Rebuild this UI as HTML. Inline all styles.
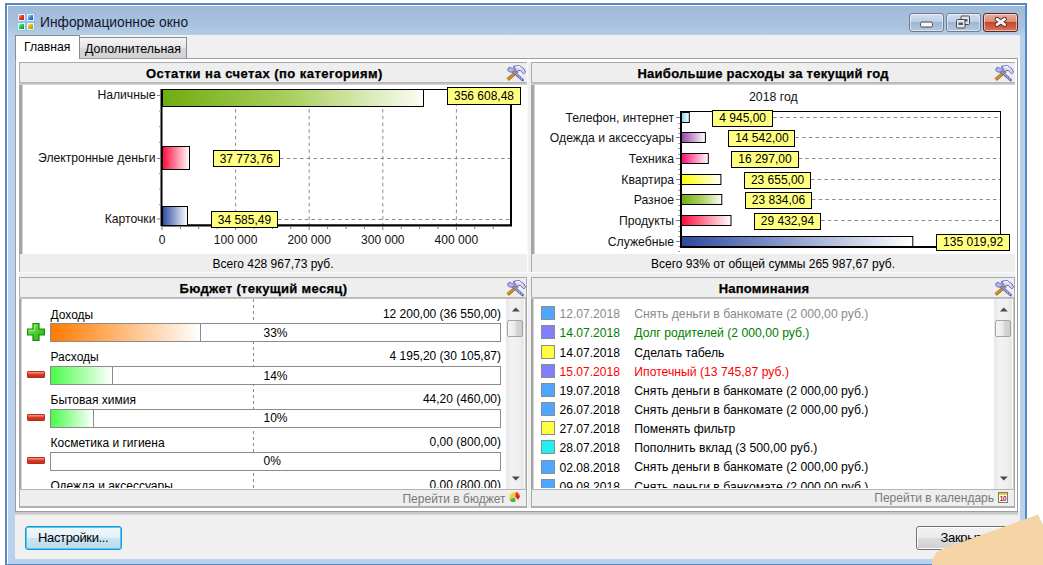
<!DOCTYPE html><html><head><meta charset="utf-8"><style>
*{margin:0;padding:0;box-sizing:border-box}
html,body{width:1043px;height:565px;overflow:hidden;background:#fff;font-family:"Liberation Sans",sans-serif}
.t{position:absolute;white-space:nowrap;line-height:1}
div{position:absolute}
</style></head><body>
<div style="position:absolute;left:5px;top:3px;width:1022px;height:562px;background:#5689c2"></div>
<div style="position:absolute;left:7px;top:5px;width:1018px;height:559px;background:#fff"></div>
<div style="position:absolute;left:8px;top:6px;width:1017px;height:558px;background:linear-gradient(#9fbad8 0px,#a9c3df 20px,#b9d1ea 32px,#b9d1ea 100%)"></div>
<div style="position:absolute;left:15px;top:35px;width:1005px;height:524px;background:#f0f0f0"></div>
<svg style="position:absolute;left:17px;top:13px" width="18" height="18" viewBox="0 0 18 18">
<defs>
<linearGradient id="ir" x1="0" y1="0" x2="1" y2="1"><stop offset="0" stop-color="#ffb0a0"/><stop offset="0.45" stop-color="#f03a20"/><stop offset="1" stop-color="#c01808"/></linearGradient>
<linearGradient id="ib" x1="0" y1="0" x2="1" y2="1"><stop offset="0" stop-color="#c8e0fa"/><stop offset="0.45" stop-color="#5a8ad0"/><stop offset="1" stop-color="#1c4a9a"/></linearGradient>
<linearGradient id="ig" x1="0" y1="0" x2="1" y2="1"><stop offset="0" stop-color="#b0f8a8"/><stop offset="0.45" stop-color="#30c830"/><stop offset="1" stop-color="#089808"/></linearGradient>
<linearGradient id="iy" x1="0" y1="0" x2="1" y2="1"><stop offset="0" stop-color="#fff0a0"/><stop offset="0.45" stop-color="#f0b800"/><stop offset="1" stop-color="#c08000"/></linearGradient>
</defs>
<rect x="0.5" y="0.5" width="8" height="8" fill="#e4f2ff" stroke="#90c0ec"/>
<rect x="9.5" y="0.5" width="8" height="8" fill="#e4f2ff" stroke="#90c0ec"/>
<rect x="0.5" y="9.5" width="8" height="8" fill="#e4f2ff" stroke="#90c0ec"/>
<rect x="9.5" y="9.5" width="8" height="8" fill="#e4f2ff" stroke="#90c0ec"/>
<rect x="2" y="2" width="5" height="5" fill="url(#ir)"/>
<rect x="11" y="2" width="5" height="5" fill="url(#ib)"/>
<rect x="2" y="11" width="5" height="5" fill="url(#ig)"/>
<rect x="11" y="11" width="5" height="5" fill="url(#iy)"/>
</svg>
<div class="t" style="left:40px;top:15.71px;font-size:13.8px;color:#15152e;">Информационное окно</div>
<div style="position:absolute;left:909px;top:13px;width:35px;height:19px;border:1px solid #6d7d92;border-radius:3px;background:linear-gradient(#d0dff0 0%,#bccfe6 45%,#9db6d3 50%,#b4c9e2 100%);box-shadow:inset 0 0 0 1px rgba(255,255,255,.5)"></div>
<div style="position:absolute;left:946px;top:13px;width:35px;height:19px;border:1px solid #6d7d92;border-radius:3px;background:linear-gradient(#d0dff0 0%,#bccfe6 45%,#9db6d3 50%,#b4c9e2 100%);box-shadow:inset 0 0 0 1px rgba(255,255,255,.5)"></div>
<div style="position:absolute;left:983px;top:13px;width:35px;height:19px;border:1px solid #5a2626;border-radius:3px;background:linear-gradient(#eab0a2 0%,#db8a76 45%,#c3462d 50%,#d9765a 100%);box-shadow:inset 0 0 0 1px rgba(255,255,255,.5)"></div>
<svg style="position:absolute;left:905px;top:12px" width="120" height="22">
<rect x="15.5" y="10" width="12" height="5" rx="1.5" fill="#fafafa" stroke="#4a4a4a" stroke-width="1"/>
<rect x="56" y="4" width="8.5" height="8.5" rx="1" fill="#e6e6e6" stroke="#4a4a4a"/>
<rect x="58" y="7" width="4.5" height="2.5" fill="#4a5a7c"/>
<rect x="51.5" y="7.5" width="8.5" height="8.5" rx="1" fill="#e6e6e6" stroke="#4a4a4a"/>
<rect x="53.5" y="10.5" width="4.5" height="2.5" fill="#4a5a7c"/>
<path d="M92 7.2 L99.6 12.6 M99.6 7.2 L92 12.6" stroke="#5a2a2a" stroke-width="4.6" stroke-linecap="round"/>
<path d="M92 7.2 L99.6 12.6 M99.6 7.2 L92 12.6" stroke="#f4f4f4" stroke-width="2.8" stroke-linecap="round"/>
</svg>
<div style="position:absolute;left:15px;top:511px;width:1003px;height:4px;background:linear-gradient(#a0a4ac 0,#a0a4ac 1px,#c6c6c6 1px,#cacaca 3px,#e4e4e4 4px)"></div>
<div style="position:absolute;left:15px;top:58px;width:1003px;height:454px;background:#fff;border:1px solid #9a9ea6"></div>
<div style="position:absolute;left:1018px;top:58px;width:2px;height:453px;background:#fff"></div>
<div style="position:absolute;left:79px;top:37px;width:108px;height:21px;border:1px solid #898c95;border-bottom:none;background:linear-gradient(#f4f4f4,#e6e6e6 50%,#d8d8d8 51%,#d2d2d2)"></div>
<div style="position:absolute;left:15px;top:35px;width:65px;height:24px;border:1px solid #898c95;border-bottom:none;background:#fff"></div>
<div class="t" style="left:24px;top:41px;font-size:12.2px;color:#000;">Главная</div>
<div class="t" style="left:85px;top:43.2px;font-size:12.4px;color:#000;">Дополнительная</div>
<div style="position:absolute;left:527px;top:62px;width:4px;height:446px;background:#efefef;border-left:1px solid #f9f9f9"></div>
<div style="position:absolute;left:19px;top:272px;width:996px;height:5px;background:#efefef;border-top:1px solid #f9f9f9"></div>
<div style="position:absolute;left:19px;top:62px;width:508px;height:210px;background:#eeeeee;border-top:1px solid #a9a9a9;border-left:1px solid #a9a9a9;"></div>
<div style="position:absolute;left:19px;top:84px;width:508px;height:170px;background:#fff;border-left:3px solid #a4a4a4;box-shadow:inset 1px 0 0 #d4d4d4"></div>
<div style="position:absolute;left:19px;top:82px;width:508px;height:3px;background:linear-gradient(#b2b2b2,#c4c4c4 66%,#e4e4e4)"></div>
<div class="t" style="left:146px;top:67.19px;font-size:13px;color:#000;font-weight:bold;letter-spacing:0.457px;-webkit-text-stroke:0.25px #000">Остатки на счетах (по категориям)</div>
<svg style="position:absolute;left:504px;top:62px" width="24" height="24" viewBox="0 0 24 24">
<path d="M3.6 17.6 L13.4 9.2" stroke="#b07818" stroke-width="3.4" stroke-linecap="butt"/>
<path d="M3.8 17.2 L13.2 9.4" stroke="#f0b040" stroke-width="1.6" stroke-dasharray="1,1"/>
<path d="M9 9.5 L18.6 18" stroke="#6c6cb8" stroke-width="2.8" stroke-linecap="round"/>
<path d="M9.5 9.8 L18 17.4" stroke="#e8e8fa" stroke-width="1" stroke-dasharray="1.5,1"/>
<path d="M9.5 4.2 L15.2 3.6 L19.8 6.6 L21.6 10.2 L19.8 11.8 L16.2 8.4 L12.4 9.2 Z" fill="#d4d6f4" stroke="#6a6ac0" stroke-width="1"/>
<path d="M12 5 L15 4.6 L17.5 6.5" stroke="#ffffff" stroke-width="1.2" fill="none"/>
<path d="M4.2 6 L6.5 5.2 L8.2 7 L9.5 5.5 L10.6 6.6 L9.5 9.8 L6.2 10.2 L3.8 8.6 Z" fill="#b4bcea" stroke="#6a6ac0" stroke-width="1"/>
</svg>
<div style="position:absolute;left:531px;top:62px;width:484px;height:210px;background:#eeeeee;border-top:1px solid #a9a9a9;border-left:1px solid #a9a9a9;"></div>
<div style="position:absolute;left:531px;top:84px;width:484px;height:170px;background:#fff;border-left:3px solid #a4a4a4;box-shadow:inset 1px 0 0 #d4d4d4"></div>
<div style="position:absolute;left:531px;top:82px;width:484px;height:3px;background:linear-gradient(#b2b2b2,#c4c4c4 66%,#e4e4e4)"></div>
<div class="t" style="left:637.4px;top:67.19px;font-size:13px;color:#000;font-weight:bold;letter-spacing:0.274px;-webkit-text-stroke:0.25px #000">Наибольшие расходы за текущий год</div>
<svg style="position:absolute;left:992px;top:62px" width="24" height="24" viewBox="0 0 24 24">
<path d="M3.6 17.6 L13.4 9.2" stroke="#b07818" stroke-width="3.4" stroke-linecap="butt"/>
<path d="M3.8 17.2 L13.2 9.4" stroke="#f0b040" stroke-width="1.6" stroke-dasharray="1,1"/>
<path d="M9 9.5 L18.6 18" stroke="#6c6cb8" stroke-width="2.8" stroke-linecap="round"/>
<path d="M9.5 9.8 L18 17.4" stroke="#e8e8fa" stroke-width="1" stroke-dasharray="1.5,1"/>
<path d="M9.5 4.2 L15.2 3.6 L19.8 6.6 L21.6 10.2 L19.8 11.8 L16.2 8.4 L12.4 9.2 Z" fill="#d4d6f4" stroke="#6a6ac0" stroke-width="1"/>
<path d="M12 5 L15 4.6 L17.5 6.5" stroke="#ffffff" stroke-width="1.2" fill="none"/>
<path d="M4.2 6 L6.5 5.2 L8.2 7 L9.5 5.5 L10.6 6.6 L9.5 9.8 L6.2 10.2 L3.8 8.6 Z" fill="#b4bcea" stroke="#6a6ac0" stroke-width="1"/>
</svg>
<div style="position:absolute;left:19px;top:277px;width:508px;height:231px;background:#eeeeee;border-top:1px solid #a9a9a9;border-left:1px solid #a9a9a9;border-bottom:2px solid #b0b0b0;"></div>
<div style="position:absolute;left:19px;top:299px;width:508px;height:190px;background:#fff;border-left:2px solid #a4a4a4;box-shadow:inset 1px 0 0 #d4d4d4"></div>
<div style="position:absolute;left:19px;top:297px;width:508px;height:2px;background:linear-gradient(#b0b0b0,#c8c8c8)"></div>
<div style="position:absolute;left:19px;top:489px;width:508px;height:1px;background:#b4b4b4"></div>
<div class="t" style="left:179.5px;top:282.19px;font-size:13px;color:#000;font-weight:bold;letter-spacing:0.326px;-webkit-text-stroke:0.25px #000">Бюджет (текущий месяц)</div>
<svg style="position:absolute;left:504px;top:277px" width="24" height="24" viewBox="0 0 24 24">
<path d="M3.6 17.6 L13.4 9.2" stroke="#b07818" stroke-width="3.4" stroke-linecap="butt"/>
<path d="M3.8 17.2 L13.2 9.4" stroke="#f0b040" stroke-width="1.6" stroke-dasharray="1,1"/>
<path d="M9 9.5 L18.6 18" stroke="#6c6cb8" stroke-width="2.8" stroke-linecap="round"/>
<path d="M9.5 9.8 L18 17.4" stroke="#e8e8fa" stroke-width="1" stroke-dasharray="1.5,1"/>
<path d="M9.5 4.2 L15.2 3.6 L19.8 6.6 L21.6 10.2 L19.8 11.8 L16.2 8.4 L12.4 9.2 Z" fill="#d4d6f4" stroke="#6a6ac0" stroke-width="1"/>
<path d="M12 5 L15 4.6 L17.5 6.5" stroke="#ffffff" stroke-width="1.2" fill="none"/>
<path d="M4.2 6 L6.5 5.2 L8.2 7 L9.5 5.5 L10.6 6.6 L9.5 9.8 L6.2 10.2 L3.8 8.6 Z" fill="#b4bcea" stroke="#6a6ac0" stroke-width="1"/>
</svg>
<div style="position:absolute;left:531px;top:277px;width:484px;height:231px;background:#eeeeee;border-top:1px solid #a9a9a9;border-left:1px solid #a9a9a9;border-bottom:2px solid #b0b0b0;"></div>
<div style="position:absolute;left:531px;top:299px;width:484px;height:190px;background:#fff;border-left:2px solid #a4a4a4;box-shadow:inset 1px 0 0 #d4d4d4"></div>
<div style="position:absolute;left:531px;top:297px;width:484px;height:2px;background:linear-gradient(#b0b0b0,#c8c8c8)"></div>
<div style="position:absolute;left:531px;top:489px;width:484px;height:1px;background:#b4b4b4"></div>
<div class="t" style="left:718.7px;top:282.19px;font-size:13px;color:#000;font-weight:bold;letter-spacing:0.204px;-webkit-text-stroke:0.25px #000">Напоминания</div>
<svg style="position:absolute;left:992px;top:277px" width="24" height="24" viewBox="0 0 24 24">
<path d="M3.6 17.6 L13.4 9.2" stroke="#b07818" stroke-width="3.4" stroke-linecap="butt"/>
<path d="M3.8 17.2 L13.2 9.4" stroke="#f0b040" stroke-width="1.6" stroke-dasharray="1,1"/>
<path d="M9 9.5 L18.6 18" stroke="#6c6cb8" stroke-width="2.8" stroke-linecap="round"/>
<path d="M9.5 9.8 L18 17.4" stroke="#e8e8fa" stroke-width="1" stroke-dasharray="1.5,1"/>
<path d="M9.5 4.2 L15.2 3.6 L19.8 6.6 L21.6 10.2 L19.8 11.8 L16.2 8.4 L12.4 9.2 Z" fill="#d4d6f4" stroke="#6a6ac0" stroke-width="1"/>
<path d="M12 5 L15 4.6 L17.5 6.5" stroke="#ffffff" stroke-width="1.2" fill="none"/>
<path d="M4.2 6 L6.5 5.2 L8.2 7 L9.5 5.5 L10.6 6.6 L9.5 9.8 L6.2 10.2 L3.8 8.6 Z" fill="#b4bcea" stroke="#6a6ac0" stroke-width="1"/>
</svg>
<div style="position:absolute;left:1014px;top:277px;width:1px;height:231px;background:#a8a8a8"></div>
<div style="position:absolute;left:526px;top:277px;width:1px;height:231px;background:#a8a8a8"></div>
<svg style="position:absolute;left:0;top:0" width="1043" height="565"><line x1="235.6" y1="89" x2="235.6" y2="225" stroke="#8a8a8a" stroke-dasharray="3.5,3.2"/><line x1="309.2" y1="89" x2="309.2" y2="225" stroke="#8a8a8a" stroke-dasharray="3.5,3.2"/><line x1="382.8" y1="89" x2="382.8" y2="225" stroke="#8a8a8a" stroke-dasharray="3.5,3.2"/><line x1="456.4" y1="89" x2="456.4" y2="225" stroke="#8a8a8a" stroke-dasharray="3.5,3.2"/><line x1="280" y1="158.5" x2="510" y2="158.5" stroke="#8a8a8a" stroke-dasharray="3.5,3.2"/><line x1="278" y1="219.5" x2="510" y2="219.5" stroke="#8a8a8a" stroke-dasharray="3.5,3.2"/><rect x="161.5" y="89.5" width="349" height="135.5" fill="none" stroke="#000" stroke-width="1"/><line x1="161.5" y1="89" x2="161.5" y2="226" stroke="#000" stroke-width="2"/><line x1="161" y1="225.5" x2="512" y2="225.5" stroke="#000" stroke-width="2"/><line x1="511" y1="89" x2="511" y2="226" stroke="#000" stroke-width="2"/><line x1="162.0" y1="226" x2="162.0" y2="230" stroke="#7a7a7a" stroke-width="1"/><line x1="180.4" y1="226" x2="180.4" y2="229" stroke="#7a7a7a" stroke-width="1"/><line x1="198.8" y1="226" x2="198.8" y2="229" stroke="#7a7a7a" stroke-width="1"/><line x1="217.2" y1="226" x2="217.2" y2="229" stroke="#7a7a7a" stroke-width="1"/><line x1="235.6" y1="226" x2="235.6" y2="230" stroke="#7a7a7a" stroke-width="1"/><line x1="254.0" y1="226" x2="254.0" y2="229" stroke="#7a7a7a" stroke-width="1"/><line x1="272.4" y1="226" x2="272.4" y2="229" stroke="#7a7a7a" stroke-width="1"/><line x1="290.8" y1="226" x2="290.8" y2="229" stroke="#7a7a7a" stroke-width="1"/><line x1="309.2" y1="226" x2="309.2" y2="230" stroke="#7a7a7a" stroke-width="1"/><line x1="327.6" y1="226" x2="327.6" y2="229" stroke="#7a7a7a" stroke-width="1"/><line x1="346.0" y1="226" x2="346.0" y2="229" stroke="#7a7a7a" stroke-width="1"/><line x1="364.4" y1="226" x2="364.4" y2="229" stroke="#7a7a7a" stroke-width="1"/><line x1="382.8" y1="226" x2="382.8" y2="230" stroke="#7a7a7a" stroke-width="1"/><line x1="401.2" y1="226" x2="401.2" y2="229" stroke="#7a7a7a" stroke-width="1"/><line x1="419.6" y1="226" x2="419.6" y2="229" stroke="#7a7a7a" stroke-width="1"/><line x1="438.0" y1="226" x2="438.0" y2="229" stroke="#7a7a7a" stroke-width="1"/><line x1="456.4" y1="226" x2="456.4" y2="230" stroke="#7a7a7a" stroke-width="1"/><line x1="474.8" y1="226" x2="474.8" y2="229" stroke="#7a7a7a" stroke-width="1"/><line x1="493.2" y1="226" x2="493.2" y2="229" stroke="#7a7a7a" stroke-width="1"/><line x1="157" y1="95.5" x2="161" y2="95.5" stroke="#808080" stroke-width="1"/><line x1="157" y1="158.5" x2="161" y2="158.5" stroke="#808080" stroke-width="1"/><line x1="157" y1="219" x2="161" y2="219" stroke="#808080" stroke-width="1"/><line x1="159" y1="111.1" x2="161" y2="111.1" stroke="#909090" stroke-width="1"/><line x1="159" y1="126.7" x2="161" y2="126.7" stroke="#909090" stroke-width="1"/><line x1="159" y1="142.3" x2="161" y2="142.3" stroke="#909090" stroke-width="1"/><line x1="159" y1="173.5" x2="161" y2="173.5" stroke="#909090" stroke-width="1"/><line x1="159" y1="189.1" x2="161" y2="189.1" stroke="#909090" stroke-width="1"/><line x1="159" y1="204.7" x2="161" y2="204.7" stroke="#909090" stroke-width="1"/><defs><linearGradient id="gG"><stop offset="0" stop-color="#70ac10"/><stop offset="0.5" stop-color="#acd060"/><stop offset="1" stop-color="#fbfdf6"/></linearGradient><linearGradient id="gR"><stop offset="0" stop-color="#ff0a3c"/><stop offset="1" stop-color="#ffffff"/></linearGradient><linearGradient id="gB"><stop offset="0" stop-color="#2c4aa0"/><stop offset="1" stop-color="#ffffff"/></linearGradient><linearGradient id="gC"><stop offset="0" stop-color="#78d4ee"/><stop offset="1" stop-color="#ffffff"/></linearGradient><linearGradient id="gP"><stop offset="0" stop-color="#9444a6"/><stop offset="1" stop-color="#ffffff"/></linearGradient><linearGradient id="gM"><stop offset="0" stop-color="#ff0a6e"/><stop offset="1" stop-color="#ffffff"/></linearGradient><linearGradient id="gY"><stop offset="0" stop-color="#ffff00"/><stop offset="1" stop-color="#ffffff"/></linearGradient></defs><rect x="162.5" y="89.5" width="261" height="17" fill="url(#gG)" stroke="#000"/><rect x="162.5" y="146.5" width="27" height="23" fill="url(#gR)" stroke="#000"/><rect x="162.5" y="206.5" width="25" height="19" fill="url(#gB)" stroke="#000"/><line x1="773" y1="117.5" x2="1000" y2="117.5" stroke="#8a8a8a" stroke-dasharray="3.5,3.2"/><line x1="795.5" y1="137.5" x2="1000" y2="137.5" stroke="#8a8a8a" stroke-dasharray="3.5,3.2"/><line x1="798.6" y1="158.5" x2="1000" y2="158.5" stroke="#8a8a8a" stroke-dasharray="3.5,3.2"/><line x1="811" y1="179.5" x2="1000" y2="179.5" stroke="#8a8a8a" stroke-dasharray="3.5,3.2"/><line x1="812" y1="199.5" x2="1000" y2="199.5" stroke="#8a8a8a" stroke-dasharray="3.5,3.2"/><line x1="821" y1="220.5" x2="1000" y2="220.5" stroke="#8a8a8a" stroke-dasharray="3.5,3.2"/><rect x="680.5" y="111.5" width="320" height="136" fill="none" stroke="#000" stroke-width="1"/><line x1="681" y1="111" x2="681" y2="248" stroke="#000" stroke-width="2"/><line x1="680" y1="247" x2="1001" y2="247" stroke="#000" stroke-width="2"/><line x1="676" y1="117.5" x2="680" y2="117.5" stroke="#808080" stroke-width="1"/><line x1="676" y1="137.5" x2="680" y2="137.5" stroke="#808080" stroke-width="1"/><line x1="676" y1="158.5" x2="680" y2="158.5" stroke="#808080" stroke-width="1"/><line x1="676" y1="179.5" x2="680" y2="179.5" stroke="#808080" stroke-width="1"/><line x1="676" y1="199.5" x2="680" y2="199.5" stroke="#808080" stroke-width="1"/><line x1="676" y1="220.5" x2="680" y2="220.5" stroke="#808080" stroke-width="1"/><line x1="676" y1="241.5" x2="680" y2="241.5" stroke="#808080" stroke-width="1"/><line x1="678" y1="123.5" x2="680" y2="123.5" stroke="#a0a0a0" stroke-width="1"/><line x1="678" y1="128.5" x2="680" y2="128.5" stroke="#a0a0a0" stroke-width="1"/><line x1="678" y1="133.5" x2="680" y2="133.5" stroke="#a0a0a0" stroke-width="1"/><line x1="678" y1="143.5" x2="680" y2="143.5" stroke="#a0a0a0" stroke-width="1"/><line x1="678" y1="148.5" x2="680" y2="148.5" stroke="#a0a0a0" stroke-width="1"/><line x1="678" y1="154.5" x2="680" y2="154.5" stroke="#a0a0a0" stroke-width="1"/><line x1="678" y1="164.5" x2="680" y2="164.5" stroke="#a0a0a0" stroke-width="1"/><line x1="678" y1="169.5" x2="680" y2="169.5" stroke="#a0a0a0" stroke-width="1"/><line x1="678" y1="174.5" x2="680" y2="174.5" stroke="#a0a0a0" stroke-width="1"/><line x1="678" y1="184.5" x2="680" y2="184.5" stroke="#a0a0a0" stroke-width="1"/><line x1="678" y1="190.5" x2="680" y2="190.5" stroke="#a0a0a0" stroke-width="1"/><line x1="678" y1="195.5" x2="680" y2="195.5" stroke="#a0a0a0" stroke-width="1"/><line x1="678" y1="205.5" x2="680" y2="205.5" stroke="#a0a0a0" stroke-width="1"/><line x1="678" y1="210.5" x2="680" y2="210.5" stroke="#a0a0a0" stroke-width="1"/><line x1="678" y1="215.5" x2="680" y2="215.5" stroke="#a0a0a0" stroke-width="1"/><line x1="678" y1="226.5" x2="680" y2="226.5" stroke="#a0a0a0" stroke-width="1"/><line x1="678" y1="231.5" x2="680" y2="231.5" stroke="#a0a0a0" stroke-width="1"/><line x1="678" y1="236.5" x2="680" y2="236.5" stroke="#a0a0a0" stroke-width="1"/><line x1="678" y1="246.5" x2="680" y2="246.5" stroke="#a0a0a0" stroke-width="1"/><line x1="678" y1="251.5" x2="680" y2="251.5" stroke="#a0a0a0" stroke-width="1"/><rect x="681.5" y="112.5" width="7.8" height="10" fill="url(#gC)" stroke="#000"/><rect x="681.5" y="132.5" width="23.9" height="10" fill="url(#gP)" stroke="#000"/><rect x="681.5" y="153.5" width="26.8" height="10" fill="url(#gM)" stroke="#000"/><rect x="681.5" y="174.5" width="39.4" height="10" fill="url(#gY)" stroke="#000"/><rect x="681.5" y="194.5" width="40.3" height="10" fill="url(#gG)" stroke="#000"/><rect x="681.5" y="215.5" width="49.5" height="10" fill="url(#gR)" stroke="#000"/><rect x="681.5" y="236.5" width="231.3" height="10" fill="url(#gB)" stroke="#000"/></svg>
<div class="t" style="right:887.5px;text-align:right;top:89.38px;font-size:12.2px;color:#111;">Наличные</div>
<div class="t" style="right:887.5px;text-align:right;top:152.38px;font-size:12.2px;color:#111;">Электронные деньги</div>
<div class="t" style="right:887.5px;text-align:right;top:213.08px;font-size:12.2px;color:#111;">Карточки</div>
<div style="position:absolute;left:447px;top:87px;width:74px;height:18px;background:#ffff80;border:1px solid #000"></div>
<div class="t" style="left:184.0px;width:600px;text-align:center;top:90.18px;font-size:12px;color:#000;">356 608,48</div>
<div style="position:absolute;left:212.7px;top:150.2px;width:67.30000000000001px;height:17.100000000000023px;background:#ffff80;border:1px solid #000"></div>
<div class="t" style="left:-53.650000000000006px;width:600px;text-align:center;top:152.93px;font-size:12px;color:#000;">37 773,76</div>
<div style="position:absolute;left:210.8px;top:211px;width:67.19999999999999px;height:17.19999999999999px;background:#ffff80;border:1px solid #000"></div>
<div class="t" style="left:-55.599999999999994px;width:600px;text-align:center;top:213.78px;font-size:12px;color:#000;">34 585,49</div>
<div class="t" style="left:-138px;width:600px;text-align:center;top:234.16px;font-size:12.05px;color:#111;">0</div>
<div class="t" style="left:-64.4px;width:600px;text-align:center;top:234.16px;font-size:12.05px;color:#111;">100 000</div>
<div class="t" style="left:9.199999999999989px;width:600px;text-align:center;top:234.16px;font-size:12.05px;color:#111;">200 000</div>
<div class="t" style="left:82.80000000000001px;width:600px;text-align:center;top:234.16px;font-size:12.05px;color:#111;">300 000</div>
<div class="t" style="left:156.39999999999998px;width:600px;text-align:center;top:234.16px;font-size:12.05px;color:#111;">400 000</div>
<div class="t" style="left:-27px;width:600px;text-align:center;top:257.98px;font-size:12px;color:#000;">Всего 428 967,73 руб.</div>
<div class="t" style="left:473.4px;width:600px;text-align:center;top:91.23px;font-size:12.3px;color:#111;">2018 год</div>
<div class="t" style="right:369px;text-align:right;top:112.08px;font-size:12.2px;color:#111;">Телефон, интернет</div>
<div style="position:absolute;left:712.3px;top:109.5px;width:60.700000000000045px;height:17.400000000000006px;background:#ffff80;border:1px solid #000"></div>
<div class="t" style="left:442.65px;width:600px;text-align:center;top:112.38px;font-size:12px;color:#000;">4 945,00</div>
<div class="t" style="right:369px;text-align:right;top:132.08px;font-size:12.2px;color:#111;">Одежда и аксессуары</div>
<div style="position:absolute;left:728.3px;top:129.5px;width:67.20000000000005px;height:17.399999999999977px;background:#ffff80;border:1px solid #000"></div>
<div class="t" style="left:461.9px;width:600px;text-align:center;top:132.38px;font-size:12px;color:#000;">14 542,00</div>
<div class="t" style="right:369px;text-align:right;top:153.08px;font-size:12.2px;color:#111;">Техника</div>
<div style="position:absolute;left:731.3px;top:150.5px;width:67.30000000000007px;height:17.399999999999977px;background:#ffff80;border:1px solid #000"></div>
<div class="t" style="left:464.95000000000005px;width:600px;text-align:center;top:153.38px;font-size:12px;color:#000;">16 297,00</div>
<div class="t" style="right:369px;text-align:right;top:174.08px;font-size:12.2px;color:#111;">Квартира</div>
<div style="position:absolute;left:744.2px;top:171.5px;width:66.79999999999995px;height:17.399999999999977px;background:#ffff80;border:1px solid #000"></div>
<div class="t" style="left:477.6px;width:600px;text-align:center;top:174.38px;font-size:12px;color:#000;">23 655,00</div>
<div class="t" style="right:369px;text-align:right;top:194.08px;font-size:12.2px;color:#111;">Разное</div>
<div style="position:absolute;left:745px;top:191.5px;width:67px;height:17.399999999999977px;background:#ffff80;border:1px solid #000"></div>
<div class="t" style="left:478.5px;width:600px;text-align:center;top:194.38px;font-size:12px;color:#000;">23 834,06</div>
<div class="t" style="right:369px;text-align:right;top:215.08px;font-size:12.2px;color:#111;">Продукты</div>
<div style="position:absolute;left:754px;top:212.5px;width:67px;height:17.399999999999977px;background:#ffff80;border:1px solid #000"></div>
<div class="t" style="left:487.5px;width:600px;text-align:center;top:215.38px;font-size:12px;color:#000;">29 432,94</div>
<div class="t" style="right:369px;text-align:right;top:236.08px;font-size:12.2px;color:#111;">Служебные</div>
<div style="position:absolute;left:936.3px;top:233.5px;width:73.70000000000005px;height:17.399999999999977px;background:#ffff80;border:1px solid #000"></div>
<div class="t" style="left:673.15px;width:600px;text-align:center;top:236.38px;font-size:12px;color:#000;">135 019,92</div>
<div class="t" style="left:473px;width:600px;text-align:center;top:257.98px;font-size:12px;color:#000;">Всего 93% от общей суммы 265 987,67 руб.</div>
<div style="left:21px;top:299px;width:485px;height:189px;overflow:hidden">
<svg style="position:absolute;left:0;top:0" width="485" height="190"><line x1="232.5" y1="0" x2="232.5" y2="190" stroke="#8a8a8a" stroke-dasharray="3,3"/></svg>
<div class="t" style="left:29.5px;top:9.68px;font-size:12px;color:#000;">Доходы</div>
<div class="t" style="right:5px;text-align:right;top:8.68px;font-size:12px;color:#000;">12 200,00 (36 550,00)</div>
<div style="position:absolute;left:29px;top:24px;width:451px;height:19px;background:#fff;border:1px solid #8c8c8c"></div>
<div style="position:absolute;left:30px;top:25px;width:150px;height:17px;background:linear-gradient(90deg,#ff7a00,#fff);border-right:1px solid #8c8c8c"></div>
<div class="t" style="left:242.5px;top:27.78px;font-size:12px;color:#000;">33%</div>
<div class="t" style="left:29.5px;top:52.48px;font-size:12px;color:#000;">Расходы</div>
<div class="t" style="right:5px;text-align:right;top:51.48px;font-size:12px;color:#000;">4 195,20 (30 105,87)</div>
<div style="position:absolute;left:29px;top:67px;width:451px;height:19px;background:#fff;border:1px solid #8c8c8c"></div>
<div style="position:absolute;left:30px;top:68px;width:62px;height:17px;background:linear-gradient(90deg,#48fc48,#fff);border-right:1px solid #8c8c8c"></div>
<div class="t" style="left:242.5px;top:70.58px;font-size:12px;color:#000;">14%</div>
<div class="t" style="left:29.5px;top:95.28px;font-size:12px;color:#000;">Бытовая химия</div>
<div class="t" style="right:5px;text-align:right;top:94.28px;font-size:12px;color:#000;">44,20 (460,00)</div>
<div style="position:absolute;left:29px;top:110px;width:451px;height:19px;background:#fff;border:1px solid #8c8c8c"></div>
<div style="position:absolute;left:30px;top:111px;width:43px;height:17px;background:linear-gradient(90deg,#48fc48,#fff);border-right:1px solid #8c8c8c"></div>
<div class="t" style="left:242.5px;top:113.38px;font-size:12px;color:#000;">10%</div>
<div class="t" style="left:29.5px;top:138.08px;font-size:12px;color:#000;">Косметика и гигиена</div>
<div class="t" style="right:5px;text-align:right;top:137.08px;font-size:12px;color:#000;">0,00 (800,00)</div>
<div style="position:absolute;left:29px;top:153px;width:451px;height:19px;background:#fff;border:1px solid #8c8c8c"></div>
<div class="t" style="left:242.5px;top:156.18px;font-size:12px;color:#000;">0%</div>
<div class="t" style="left:29.5px;top:180.88px;font-size:12px;color:#000;">Одежда и аксессуары</div>
<div class="t" style="right:5px;text-align:right;top:179.88px;font-size:12px;color:#000;">0,00 (800,00)</div>
</div>
<svg style="position:absolute;left:27px;top:323px" width="18" height="18" viewBox="0 0 18 18">
<defs><linearGradient id="pg" x1="0" y1="0" x2="1" y2="1"><stop offset="0" stop-color="#90f070"/><stop offset="0.5" stop-color="#4cd02c"/><stop offset="1" stop-color="#2aa818"/></linearGradient></defs>
<path d="M6 0.5 H12 V6 H17.5 V12 H12 V17.5 H6 V12 H0.5 V6 H6 Z" fill="url(#pg)" stroke="#138a0c" stroke-width="1.2"/>
<path d="M7.5 2 V7.5 H2" stroke="#a8f890" stroke-width="1" fill="none" opacity="0.8"/>
</svg>
<div style="position:absolute;left:27px;top:371px;width:18px;height:7px;background:linear-gradient(#f7a090,#e03a22 50%,#c82a15);border:1px solid #b03020;border-radius:1px"></div>
<div style="position:absolute;left:27px;top:414px;width:18px;height:7px;background:linear-gradient(#f7a090,#e03a22 50%,#c82a15);border:1px solid #b03020;border-radius:1px"></div>
<div style="position:absolute;left:27px;top:457px;width:18px;height:7px;background:linear-gradient(#f7a090,#e03a22 50%,#c82a15);border:1px solid #b03020;border-radius:1px"></div>
<div style="position:absolute;left:506px;top:299px;width:18px;height:190px;background:linear-gradient(90deg,#e8e8e8,#f2f2f2 30%,#f0f0f0 70%,#e6e6e6)"></div>
<svg style="position:absolute;left:506px;top:299px" width="19" height="190"><path d="M5.8 12.6 L9.8 8.4 L13.8 12.6 Z" fill="#4a4a4a"/><path d="M5.8 177.4 L9.8 181.6 L13.8 177.4 Z" fill="#4a4a4a"/></svg>
<div style="position:absolute;left:507px;top:320px;width:16px;height:17px;border:1px solid #a4a4a4;border-radius:2px;background:linear-gradient(90deg,#f6f6f6,#e8e8e8 50%,#d6d6d6 60%,#cccccc)"></div>
<div style="position:absolute;left:525px;top:297px;width:1px;height:192px;background:#c4c4c4"></div>
<div class="t" style="right:537.5px;text-align:right;top:492.88px;font-size:12px;color:#7a7a7a;">Перейти в бюджет</div>
<svg style="position:absolute;left:508px;top:491px" width="13" height="12" viewBox="0 0 13 12">
<path d="M7.2 6.2 L1 7.6 C0.3 4.5 2.5 1 7.2 0.9 Z" fill="#f4cc20"/>
<path d="M1.5 6.5 C1.5 4 3 2 6 1.5" stroke="#fff080" stroke-width="1" fill="none"/>
<path d="M7.4 5.8 L7.8 0.9 C10.5 1 12 3.5 11.8 6 L10 8.8 Z" fill="#e41e1e"/>
<path d="M8.5 1.8 C10 2.2 11 3.5 11 5" stroke="#ff7070" stroke-width="1" fill="none"/>
<path d="M7.4 6.6 L1.8 8 C2.2 9.8 3 10.8 4 11 L7.4 11 Z" fill="#48b438"/>
</svg>
<div style="left:533px;top:299px;width:461px;height:189px;overflow:hidden">
<div style="position:absolute;left:8px;top:7px;width:14px;height:14px;background:#4da6ff;border:1px solid #8c8c8c"></div>
<div class="t" style="left:26.5px;top:9.33px;font-size:12.1px;color:#8a8a8a;">12.07.2018</div>
<div class="t" style="left:101.29999999999995px;top:9.28px;font-size:12.2px;color:#8a8a8a;">Снять деньги в банкомате (2 000,00 руб.)</div>
<div style="position:absolute;left:8px;top:26px;width:14px;height:14px;background:#8080ff;border:1px solid #8c8c8c"></div>
<div class="t" style="left:26.5px;top:28.48px;font-size:12.1px;color:#008000;">14.07.2018</div>
<div class="t" style="left:101.29999999999995px;top:28.43px;font-size:12.2px;color:#008000;">Долг родителей (2 000,00 руб.)</div>
<div style="position:absolute;left:8px;top:46px;width:14px;height:14px;background:#ffff40;border:1px solid #8c8c8c"></div>
<div class="t" style="left:26.5px;top:47.63px;font-size:12.1px;color:#000;">14.07.2018</div>
<div class="t" style="left:101.29999999999995px;top:47.58px;font-size:12.2px;color:#000;">Сделать табель</div>
<div style="position:absolute;left:8px;top:65px;width:14px;height:14px;background:#8080ff;border:1px solid #8c8c8c"></div>
<div class="t" style="left:26.5px;top:66.78px;font-size:12.1px;color:#ff0000;">15.07.2018</div>
<div class="t" style="left:101.29999999999995px;top:66.73px;font-size:12.2px;color:#ff0000;">Ипотечный (13 745,87 руб.)</div>
<div style="position:absolute;left:8px;top:84px;width:14px;height:14px;background:#4da6ff;border:1px solid #8c8c8c"></div>
<div class="t" style="left:26.5px;top:85.93px;font-size:12.1px;color:#000;">19.07.2018</div>
<div class="t" style="left:101.29999999999995px;top:85.88px;font-size:12.2px;color:#000;">Снять деньги в банкомате (2 000,00 руб.)</div>
<div style="position:absolute;left:8px;top:103px;width:14px;height:14px;background:#4da6ff;border:1px solid #8c8c8c"></div>
<div class="t" style="left:26.5px;top:105.08px;font-size:12.1px;color:#000;">26.07.2018</div>
<div class="t" style="left:101.29999999999995px;top:105.03px;font-size:12.2px;color:#000;">Снять деньги в банкомате (2 000,00 руб.)</div>
<div style="position:absolute;left:8px;top:122px;width:14px;height:14px;background:#ffff40;border:1px solid #8c8c8c"></div>
<div class="t" style="left:26.5px;top:124.23px;font-size:12.1px;color:#000;">27.07.2018</div>
<div class="t" style="left:101.29999999999995px;top:124.18px;font-size:12.2px;color:#000;">Поменять фильтр</div>
<div style="position:absolute;left:8px;top:141px;width:14px;height:14px;background:#20f0f0;border:1px solid #8c8c8c"></div>
<div class="t" style="left:26.5px;top:143.38px;font-size:12.1px;color:#000;">28.07.2018</div>
<div class="t" style="left:101.29999999999995px;top:143.33px;font-size:12.2px;color:#000;">Пополнить вклад (3 500,00 руб.)</div>
<div style="position:absolute;left:8px;top:161px;width:14px;height:14px;background:#4da6ff;border:1px solid #8c8c8c"></div>
<div class="t" style="left:26.5px;top:162.53px;font-size:12.1px;color:#000;">02.08.2018</div>
<div class="t" style="left:101.29999999999995px;top:162.48px;font-size:12.2px;color:#000;">Снять деньги в банкомате (2 000,00 руб.)</div>
<div style="position:absolute;left:8px;top:180px;width:14px;height:14px;background:#4da6ff;border:1px solid #8c8c8c"></div>
<div class="t" style="left:26.5px;top:181.68px;font-size:12.1px;color:#000;">09.08.2018</div>
<div class="t" style="left:101.29999999999995px;top:181.63px;font-size:12.2px;color:#000;">Снять деньги в банкомате (2 000,00 руб.)</div>
</div>
<div style="position:absolute;left:994px;top:299px;width:18px;height:190px;background:linear-gradient(90deg,#e8e8e8,#f2f2f2 30%,#f0f0f0 70%,#e6e6e6)"></div>
<svg style="position:absolute;left:994px;top:299px" width="19" height="190"><path d="M5.8 12.6 L9.8 8.4 L13.8 12.6 Z" fill="#4a4a4a"/><path d="M5.8 177.4 L9.8 181.6 L13.8 177.4 Z" fill="#4a4a4a"/></svg>
<div style="position:absolute;left:995px;top:320px;width:16px;height:17px;border:1px solid #a4a4a4;border-radius:2px;background:linear-gradient(90deg,#f6f6f6,#e8e8e8 50%,#d6d6d6 60%,#cccccc)"></div>
<div style="position:absolute;left:1013px;top:297px;width:1px;height:192px;background:#c4c4c4"></div>
<div class="t" style="right:49px;text-align:right;top:492.48px;font-size:12px;color:#7a7a7a;">Перейти в календарь</div>
<svg style="position:absolute;left:998px;top:492px" width="10" height="11" viewBox="0 0 10 11">
<rect x="0.5" y="0.5" width="9" height="10" fill="#fff" stroke="#7c7c7c"/>
<rect x="1" y="1" width="8" height="2" fill="#f2cc10"/>
<text x="5" y="9.3" font-size="6.5" font-weight="bold" text-anchor="middle" fill="#a82020" font-family="Liberation Sans" letter-spacing="-0.4">10</text>
</svg>
<div style="position:absolute;left:25px;top:526px;width:97px;height:24px;border:1px solid #2890cc;border-radius:3px;background:linear-gradient(#eef7fc 0%,#e2f1f9 48%,#c9e3f1 50%,#bedcee 100%);box-shadow:inset 0 0 0 1px #48cdfa"></div>
<div class="t" style="left:-226.8px;width:600px;text-align:center;top:531.20px;font-size:13px;color:#000;letter-spacing:-0.35px">Настройки...</div>
<div style="position:absolute;left:916px;top:526px;width:97px;height:24px;border:1px solid #707070;border-radius:3px;background:linear-gradient(#f2f2f2 0%,#ebebeb 50%,#dddddd 50%,#cfcfcf 100%);box-shadow:inset 0 0 0 1px #fcfcfc"></div>
<div class="t" style="left:664.5px;width:600px;text-align:center;top:531.40px;font-size:13px;color:#000;letter-spacing:-0.3px">Закрыть</div>
<svg style="position:absolute;left:0;top:0" width="1043" height="565"><path d="M1038.2 514.6 L1043 525 L1043 565 L932 565 C932 555 937 550 946 547.8 L1038.2 514.6 Z" fill="#f5d5a5"/></svg>
</body></html>
